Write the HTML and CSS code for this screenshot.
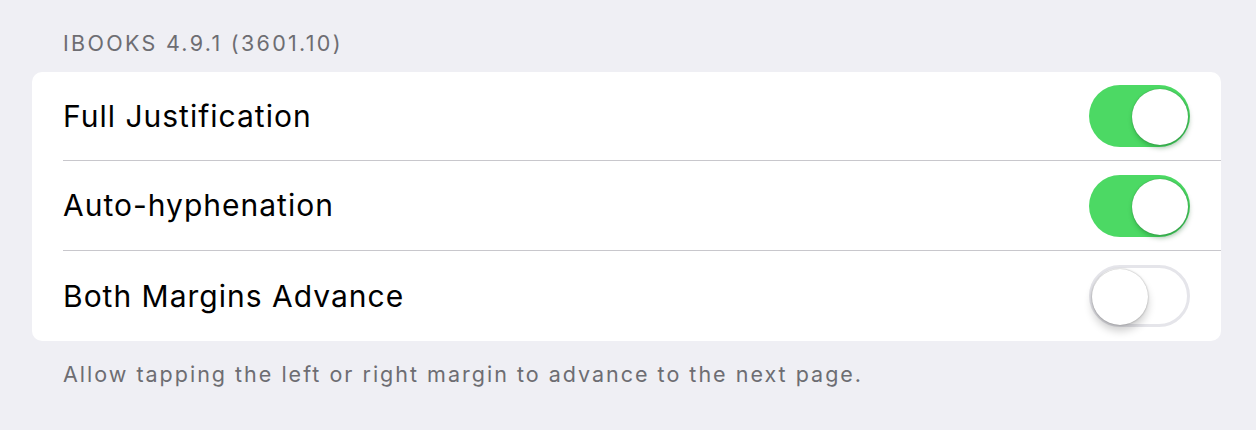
FILE: index.html
```html
<!DOCTYPE html>
<html>
<head>
<meta charset="utf-8">
<link rel="stylesheet" href="styles.css">
</head>
<body>
<div class="page">
  <div class="section-header"><span>IBOOKS 4.9.1 (3601.10)</span></div>
  <div class="card">
    <div class="row">
      <span class="label">Full Justification</span>
      <span class="switch on"><span class="knob"></span></span>
    </div>
    <div class="row">
      <span class="label">Auto-hyphenation</span>
      <span class="switch on"><span class="knob"></span></span>
    </div>
    <div class="row">
      <span class="label">Both Margins Advance</span>
      <span class="switch off"><span class="knob"></span></span>
    </div>
  </div>
  <div class="section-footer"><span>Allow tapping the left or right margin to advance to the next page.</span></div>
</div>
</body>
</html>
```

FILE: styles.css
```css
html, body {
  margin: 0;
  padding: 0;
  background: #efeff4;
}
body {
  font-family: Inter, "Liberation Sans", Arial, sans-serif;
  width: 1256px;
  height: 430px;
  overflow: hidden;
}
.page {
  padding: 0 35px 0 32px;
}
.section-header {
  color: #6d6d72;
  font-size: 21.5px;
  line-height: 24px;
  letter-spacing: 2.3px;
  padding: 31px 0 0 31px;
  box-sizing: border-box;
  height: 72px;
}
.card {
  background: #fff;
  border-radius: 10px;
  overflow: hidden;
}
.row {
  height: 90px;
  display: flex;
  align-items: center;
  justify-content: space-between;
  margin-left: 31px;
  padding-right: 31px;
  box-sizing: border-box;
  border-bottom: 1px solid #c8c7cc;
}
.row:first-child { height: 89px; }
.row:last-child {
  border-bottom: none;
}
.label {
  font-size: 30px;
  color: #000;
  letter-spacing: 1px;
  padding-bottom: 1px;
}
.switch {
  position: relative;
  width: 101px;
  height: 62px;
  border-radius: 31px;
  box-sizing: border-box;
}
.switch.on {
  background: #4cd964;
}
.switch.off {
  background: #fff;
  border: 3px solid #e5e5ea;
}
.knob {
  position: absolute;
  width: 56px;
  height: 56px;
  border-radius: 50%;
  background: #fff;
  top: 4px;
  box-shadow: 0 4px 6px rgba(0,0,0,0.18), 0 0 1px rgba(0,0,0,0.3);
}
.switch.on .knob {
  right: 2px;
  box-shadow: 1px 3px 5px rgba(0,80,20,0.35), 0 0 1px rgba(0,60,10,0.5);
}
.switch.off .knob {
  left: 0px;
  top: 1px;
  box-shadow: 0 6px 8px rgba(0,0,0,0.2), 0 0 2px rgba(0,0,0,0.35);
}
.section-footer {
  color: #6d6d72;
  font-size: 21.5px;
  line-height: 24px;
  letter-spacing: 2px;
  padding: 21px 0 0 31px;
}
```
